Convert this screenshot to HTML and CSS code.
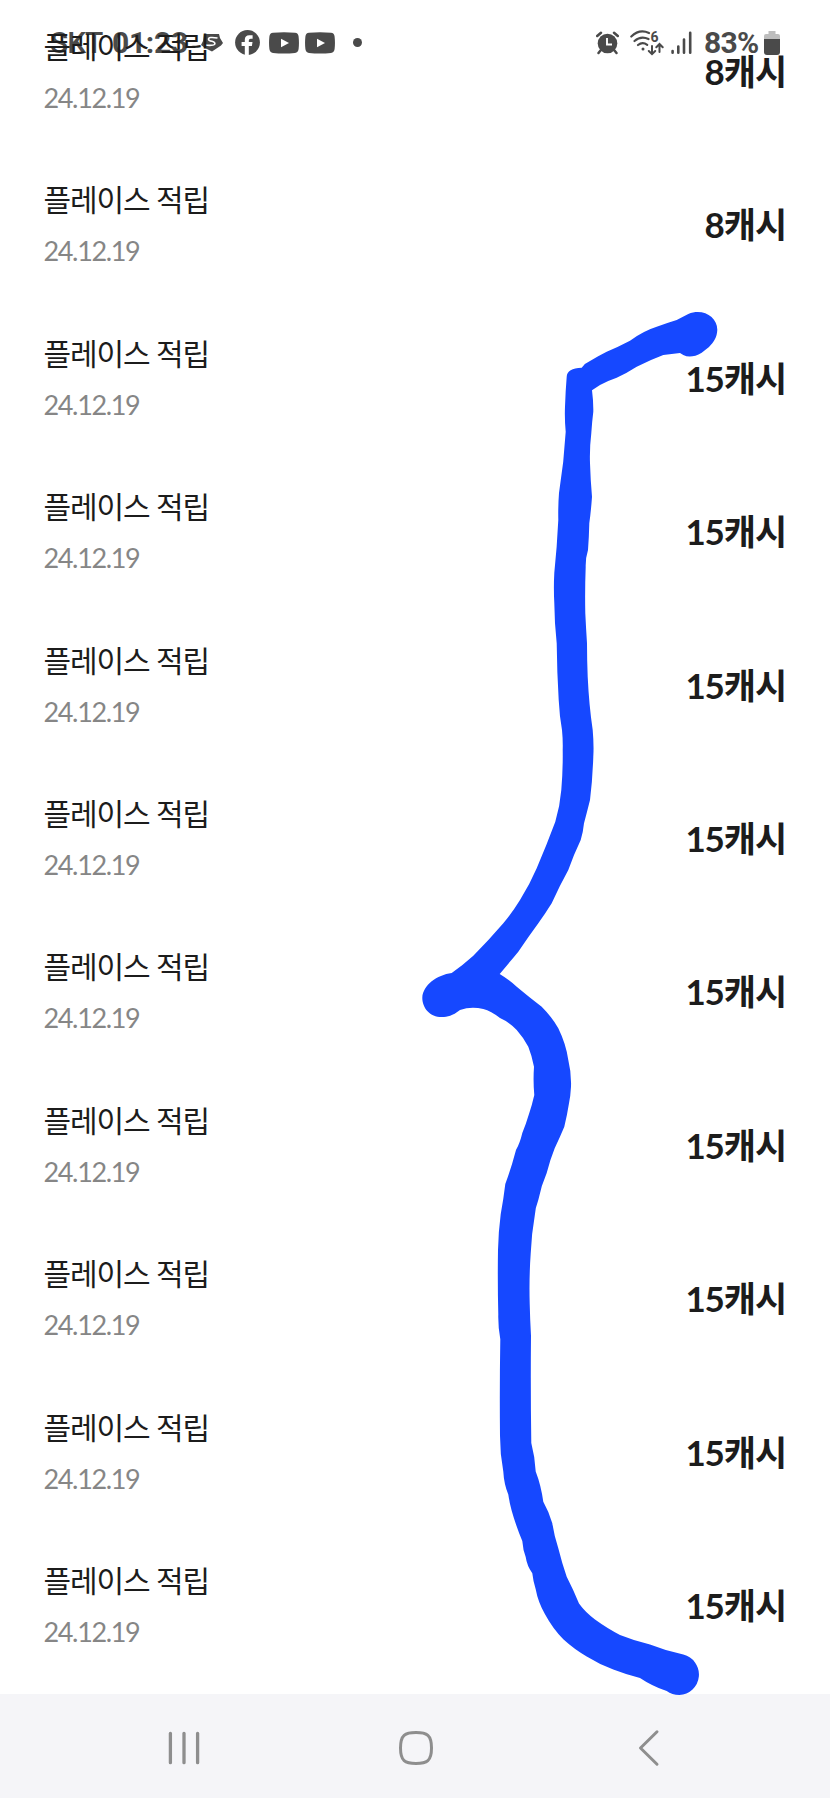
FILE: index.html
```html
<!DOCTYPE html>
<html lang="ko">
<head>
<meta charset="utf-8">
<title>적립 내역</title>
<link rel="stylesheet" href="styles.css">
</head>
<body>
<div class="screen">
  <header class="status">
    <span class="carrier">SKT</span>
    <span class="clock">01:23</span>
    <svg class="i-s" width="22" height="20" viewBox="0 0 22 20"><path fill="#4a4a4a" d="M3 1H18L19 5L22 10L20 12.500L11 18.500L4 15L0 12L2 8Z"/><path d="M16.500 5Q7.500 3.500 7.500 6.200Q7.500 7.800 11 8.300Q15 9.500 13.500 11.500Q12 13 3 12" fill="none" stroke="#fff" stroke-width="1.600"/></svg>
    <svg class="i-fb" width="25" height="25" viewBox="0 0 25 25"><circle cx="12.500" cy="12.500" r="12.400" fill="#4a4a4a"/><path fill="#fff" d="M9.800 25V16H6.600V12H9.800V9.700Q9.800 5.200 14.300 5.200H17.600V8.700H15.700Q13.800 8.700 13.800 10.500V12H17.500L16.900 16H13.800V25Z"/></svg>
    <svg class="i-yt" width="30" height="22" viewBox="0 0 30 22"><path fill="#4a4a4a" d="M4 .8Q15-.4 26 .8Q29.200 1 29.600 4.500Q30.300 11 29.600 17Q29.200 20.600 26 21Q15 22 4 21Q.8 20.600.4 17Q-.3 11 .4 4.500Q.8 1 4 .8Z"/><path fill="#fff" d="M12 6.800L20 11L12 15.200Z"/></svg>
    <svg class="i-yt" width="30" height="22" viewBox="0 0 30 22"><path fill="#4a4a4a" d="M4 .8Q15-.4 26 .8Q29.200 1 29.600 4.500Q30.300 11 29.600 17Q29.200 20.600 26 21Q15 22 4 21Q.8 20.600.4 17Q-.3 11 .4 4.500Q.8 1 4 .8Z"/><path fill="#fff" d="M12 6.800L20 11L12 15.200Z"/></svg>
    <span class="dot"></span>
    <svg class="i-alarm" width="23" height="24" viewBox="0 0 23 24"><circle cx="11.500" cy="12.500" r="9.800" fill="#4a4a4a"/><path d="M4.500 19.500L2.500 22M18.500 19.500L20.500 22M1.200 5L5 1.700M21.800 5L18 1.700" stroke="#4a4a4a" stroke-width="2.500" stroke-linecap="round"/><path d="M11 7V13.500H16" fill="none" stroke="#fff" stroke-width="1.900"/></svg>
    <svg class="i-wifi" width="34" height="26" viewBox="0 0 34 26"><g fill="none" stroke="#4a4a4a" stroke-width="2.200" stroke-linecap="round"><path d="M1.300 6.500Q9.500-1.300 19 3M4.500 11Q11 5.300 18.500 9M8 15Q12.500 11.300 17.200 14.800"/><path stroke-width="2" d="M22 16V24M18.800 21L22 24.200L25.200 21M29.500 22V14M26.300 17.200L29.500 14L32.700 17.200"/></g><circle cx="13" cy="19" r="1.500" fill="#4a4a4a"/><text x="20.500" y="12" class="six">6</text></svg>
    <svg class="i-signal" width="22" height="24" viewBox="0 0 22 24"><path d="M1.600 20V21.700M7.300 15.500V21.700M13 8.500V21.700M19.200 1.800V21.700" stroke="#4a4a4a" stroke-width="2.600" stroke-linecap="round"/></svg>
    <span class="percent">83%</span>
    <svg class="i-battery" width="16" height="24" viewBox="0 0 16 24"><path fill="#bdbdbd" d="M4.500 0H11.500V3H14Q16 3 16 5V9H0V5Q0 3 2 3H4.500Z"/><path fill="#4a4a4a" d="M0 8H16V21Q16 24 13 24H3Q0 24 0 21Z"/></svg>
  </header>

  <main class="list">
    <div class="row"><div><p class="title">플레이스 적립</p><p class="date">24.12.19</p></div><strong class="amount">8캐시</strong></div>
    <div class="row"><div><p class="title">플레이스 적립</p><p class="date">24.12.19</p></div><strong class="amount">8캐시</strong></div>
    <div class="row"><div><p class="title">플레이스 적립</p><p class="date">24.12.19</p></div><strong class="amount">15캐시</strong></div>
    <div class="row"><div><p class="title">플레이스 적립</p><p class="date">24.12.19</p></div><strong class="amount">15캐시</strong></div>
    <div class="row"><div><p class="title">플레이스 적립</p><p class="date">24.12.19</p></div><strong class="amount">15캐시</strong></div>
    <div class="row"><div><p class="title">플레이스 적립</p><p class="date">24.12.19</p></div><strong class="amount">15캐시</strong></div>
    <div class="row"><div><p class="title">플레이스 적립</p><p class="date">24.12.19</p></div><strong class="amount">15캐시</strong></div>
    <div class="row"><div><p class="title">플레이스 적립</p><p class="date">24.12.19</p></div><strong class="amount">15캐시</strong></div>
    <div class="row"><div><p class="title">플레이스 적립</p><p class="date">24.12.19</p></div><strong class="amount">15캐시</strong></div>
    <div class="row"><div><p class="title">플레이스 적립</p><p class="date">24.12.19</p></div><strong class="amount">15캐시</strong></div>
    <div class="row"><div><p class="title">플레이스 적립</p><p class="date">24.12.19</p></div><strong class="amount">15캐시</strong></div>
  </main>

  <nav class="nav">
    <svg width="34" height="38" viewBox="0 0 34 38"><path d="M3.400 4.300V33.700M17 4.300V33.700M30.600 4.300V33.700" fill="none" stroke="#8e8e8e" stroke-width="3.300" stroke-linecap="round"/></svg>
    <svg class="home" width="38" height="38" viewBox="0 0 38 38"><path d="M19 3.500C30 3.500 34.500 6 34.500 19S30 34.500 19 34.500S3.500 32 3.500 19S8 3.500 19 3.500Z" fill="none" stroke="#8e8e8e" stroke-width="3"/></svg>
    <svg width="22" height="38" viewBox="0 0 22 38"><path d="M19 2.800L2.500 19L19 35.200" fill="none" stroke="#8e8e8e" stroke-width="3" stroke-linecap="round" stroke-linejoin="round"/></svg>
  </nav>

  <svg class="marker" width="830" height="1798" viewBox="0 0 830 1798">
    <path d="M688.300 314C703 308 717.500 317 717.300 330C717 337 714 342 709 347L701.700 352.700Q691 359 683.300 355L680 353L663.300 355Q650 360 636.700 366.700Q627 373 616.700 377.700Q607 381 600 385L592 390.300Q593.500 402 593.300 411.700Q592 422 591.300 433.300Q589.500 448 590 463.300Q590.500 480 592 496.700Q591 511 589.300 523.300Q589 537 588 550Q585.500 558 585.700 566.700Q584.800 590 585.300 613.300Q586 628 587 643.300Q587 660 587.700 676.700Q589 705 592.700 730Q594 745 593.300 756.700Q592.500 780 590 800Q587 812 584 823.300Q583 833 580.700 840Q574 854 568.300 870Q560 885 551.700 903.300Q545 914 538.300 923.300Q529 936 518.300 951.700Q509 963 499.700 974Q508 979 516.700 986.700Q529 997 541.700 1006.700Q552 1017 558.300 1028.300Q566 1044 568.300 1060Q571.500 1073 571 1086.700Q570.500 1096 569 1103.300Q567 1116 564.300 1126.700Q560 1137 554.700 1148.300Q550 1160 546.700 1173Q541 1186 538.300 1200Q535.500 1207 534.700 1216Q531.500 1234 530.700 1253.600Q529 1278 529.700 1303.600Q530 1318 531 1335.700Q530.500 1390 531.300 1442.900Q535 1457 535.700 1471.400Q541 1485 543.300 1501.800Q549 1512 552.300 1523.200Q554 1535 558.300 1548.200Q562 1563 566.700 1576.800Q573 1589 579 1603.600Q585 1612 595 1619.600Q608 1629 620 1635Q635 1641 650 1644.600Q666 1651 683.300 1654.600A20.500 20.500 0 0 1 679.300 1695Q672 1695 666.700 1691Q652 1686 640 1677.900Q627 1675 613.300 1669.600Q599 1664 586.700 1656.400Q575 1650 563.300 1639.300Q553 1629 545 1614.300Q538 1602 535.700 1589.300Q533 1580 532.300 1573.200Q527 1566 525.700 1557Q523 1550 522.300 1541Q516 1526 511.700 1510.700Q509.500 1503 508.300 1494.600Q504 1484 503.300 1471.400Q500 1454 500 1435.700Q499.500 1388 500.300 1339.300Q498 1327 498.300 1314.300Q497.500 1282 498 1250Q498.500 1231 500.700 1214.300Q503.500 1199 505.300 1183.900Q511 1169 516 1150Q520 1143 522.300 1133Q526 1124 529.300 1113Q532 1105 534.300 1095Q533 1081 534 1066.700Q532 1056 528.300 1046.700Q523 1037 516.700 1030Q509 1022 500 1018Q491 1011 483.300 1009Q471 1006 460 1010C452 1016 448 1017 441.700 1017C430 1017 422.300 1008 422.300 997.700C423 985 437 975 451.700 973Q463 965 473.300 955.700Q489 940 503.300 923.300Q512 913 520 900Q530 884 536.700 868.300Q547 844 555.300 821.700Q560 806 561.300 790Q563 770 562.700 750Q563 740 562 730Q559.500 716 558.700 700Q557 672 556.700 643.300Q554.500 623 554.300 603Q553.500 588 554.300 573Q557 547 558.300 520Q558 506 559 493Q564 462 565.700 431.700Q564.500 419 565 406.700Q565.500 391 566.700 376.700C567 371 572 368 581.700 367.700Q585 363 590 361Q598 356 606.700 351.700Q618 347 630 340.700Q643 331 656.700 326.700Q667 323 676.700 320Z"/>
  </svg>
</div>
</body>
</html>
```
FILE: styles.css
```css
* { box-sizing: border-box; }
body { margin: 0; background: #fff; }
p { margin: 0; }
svg { display: block; flex: none; }

.screen {
  position: relative;
  display: flex;
  flex-direction: column;
  width: 830px;
  height: 1798px;
  overflow: hidden;
  background: #fff;
  font-family: Lato, "Noto Sans CJK KR", sans-serif;
}

.status {
  position: absolute;
  top: 0;
  left: 0;
  display: flex;
  align-items: center;
  width: 830px;
  height: 85px;
  padding: 0 50px;
  color: #4a4a4a;
  font: 700 30px/1 Roboto, sans-serif;
}
.carrier { width: 62px; font-weight: 500; letter-spacing: -1px; }
.clock { width: 89px; letter-spacing: -0.3px; }
.i-fb { margin-left: 12px; }
.i-yt { margin-left: 9px; }
.i-yt + .i-yt { margin-left: 6px; }
.dot { width: 9px; height: 9px; margin-left: 18px; border-radius: 50%; background: #4a4a4a; }
.i-alarm { margin-left: 234px; }
.i-wifi { margin-left: 11px; }
.i-signal { margin-left: 7px; }
.percent { width: 60px; margin-left: 11px; letter-spacing: -0.7px; }
.six { fill: #4a4a4a; font: 700 14px Roboto, sans-serif; }

.list { position: relative; height: 1694px; padding: 0 44px 0 43.5px; }
.row {
  display: flex;
  align-items: center;
  justify-content: space-between;
  height: 153.4px;
}
.row:first-child { margin-top: -5.2px; }
.title {
  padding-top: 1px;
  color: #1c1c1c;
  font-size: 30px;
  line-height: 52px;
  letter-spacing: -1.1px;
}
.date {
  color: #868686;
  font-size: 27px;
  line-height: 52px;
  letter-spacing: -1.35px;
}
.amount {
  padding-bottom: 1px;
  color: #1c1c1c;
  font-size: 35px;
  font-weight: 700;
  line-height: 52px;
  letter-spacing: -1.1px;
}

.nav {
  display: flex;
  align-items: center;
  justify-content: space-between;
  height: 104px;
  padding: 4px 170px 0 167px;
  background: #f5f5f8;
}
.home { margin-right: 7px; }

.marker { position: absolute; top: 0; left: 0; fill: #1648ff; }
```
